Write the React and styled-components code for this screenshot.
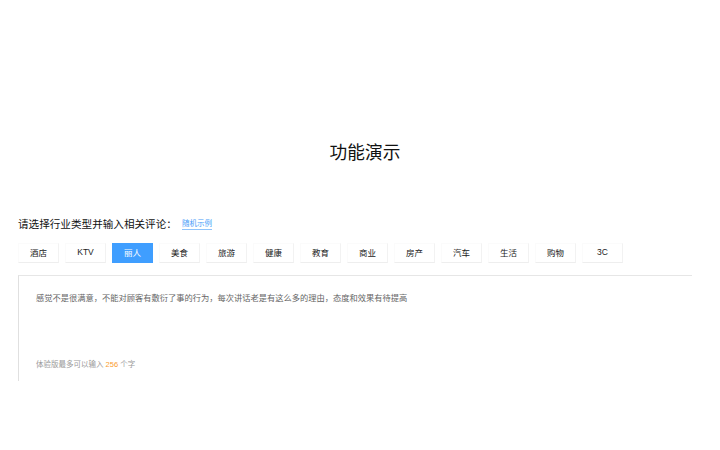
import styled, { createGlobalStyle } from "styled-components";

const GlobalStyle = createGlobalStyle`
  body {
    margin: 0;
    background: #fff;
    font-family: "Liberation Sans", "Noto Sans CJK SC", sans-serif;
  }
`;

const Container = styled.div`
  width: 720px;
  height: 450px;
  padding: 143px 8px 0 18px;
  box-sizing: border-box;
  overflow: hidden;
`;

const Title = styled.h1`
  margin: 0;
  height: 21px;
  font-size: 17.7px;
  line-height: 21px;
  font-weight: 400;
  color: #111;
  text-align: center;
`;

const HeadRow = styled.div`
  display: flex;
  align-items: center;
  height: 16px;
  margin-top: 52px;
`;

const HeadText = styled.span`
  font-size: 10.6px;
  line-height: 16px;
  color: #111;
`;

const RandomLink = styled.a`
  margin-left: 5px;
  font-size: 7.5px;
  line-height: 10px;
  color: #4a9df8;
  border-bottom: 1px solid #8fc3fb;
`;

const Tabs = styled.div`
  display: flex;
  gap: 6px;
  margin-top: 11px;
`;

const Tab = styled.div`
  width: 41px;
  height: 20px;
  padding-bottom: 3px;
  box-sizing: border-box;
  display: flex;
  align-items: center;
  justify-content: center;
  font-size: 8.5px;
  background: ${(props) => (props.$active ? "#3f9eff" : "#fff")};
  color: ${(props) => (props.$active ? "#fff" : "#222")};
  border-style: solid;
  border-width: ${(props) => (props.$active ? "0" : "1px")};
  border-color: #fbfbfb #f2f2f2 #eeeeee #fbfbfb;
`;

const Panel = styled.div`
  width: 674px;
  height: 106px;
  margin-top: 12px;
  padding: 17px 17px 0;
  box-sizing: border-box;
  display: flex;
  flex-direction: column;
  justify-content: space-between;
  border-top: 1px solid #e6e6e6;
  border-left: 1px solid #e0e0e0;
`;

const Comment = styled.p`
  margin: 0;
  font-size: 8.25px;
  line-height: 12px;
  color: #666;
`;

const Hint = styled.p`
  margin: 0 0 10px;
  font-size: 7.5px;
  line-height: 12px;
  color: #999;
`;

const Count = styled.span`
  color: #fa9d2f;
`;

const tabs = ["酒店", "KTV", "丽人", "美食", "旅游", "健康", "教育", "商业", "房产", "汽车", "生活", "购物", "3C"];

const App = () => {
  return (
    <Container>
      <GlobalStyle />
      <Title>功能演示</Title>
      <HeadRow>
        <HeadText>请选择行业类型并输入相关评论：</HeadText>
        <RandomLink>随机示例</RandomLink>
      </HeadRow>
      <Tabs>
        {tabs.map((t) => (
          <Tab key={t} $active={t === "丽人"}>
            {t}
          </Tab>
        ))}
      </Tabs>
      <Panel>
        <Comment>感觉不是很满意，不能对顾客有敷衍了事的行为，每次讲话老是有这么多的理由，态度和效果有待提高</Comment>
        <Hint>
          体验版最多可以输入 <Count>256</Count> 个字
        </Hint>
      </Panel>
    </Container>
  );
};

export default App;
